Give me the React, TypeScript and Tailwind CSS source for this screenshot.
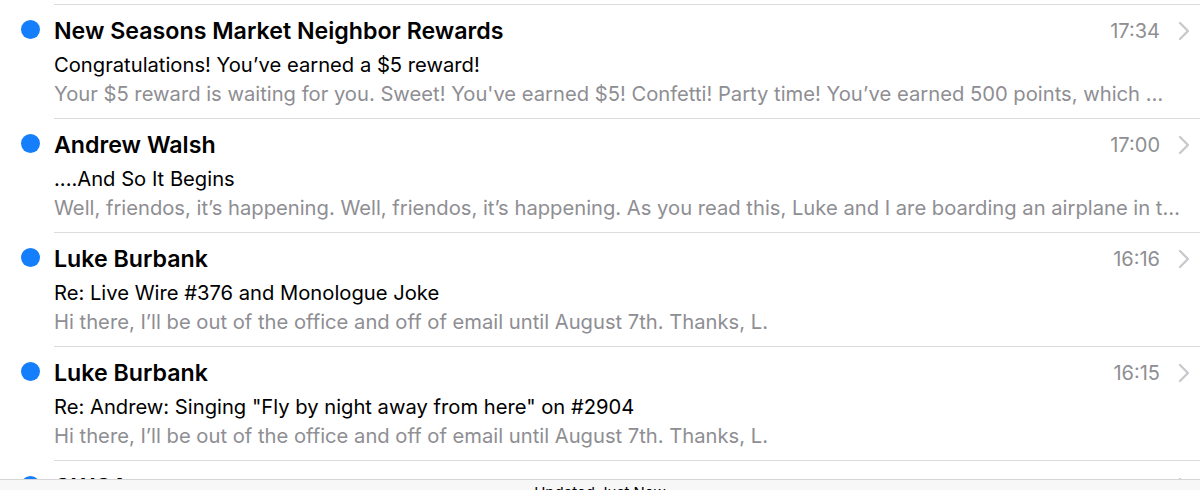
import React from 'react';

interface Mail {
  from: string;
  time: string;
  subject: string;
  preview: string;
}

const mails: Mail[] = [
  {
    from: 'New Seasons Market Neighbor Rewards',
    time: '17:34',
    subject: 'Congratulations! You’ve earned a $5 reward!',
    preview:
      'Your $5 reward is waiting for you. Sweet! You\'ve earned $5! Confetti! Party time! You’ve earned 500 points, which means you can redeem them at any store.',
  },
  {
    from: 'Andrew Walsh',
    time: '17:00',
    subject: '....And So It Begins',
    preview:
      'Well, friendos, it’s happening. Well, friendos, it’s happening. As you read this, Luke and I are boarding an airplane in the morning.',
  },
  {
    from: 'Luke Burbank',
    time: '16:16',
    subject: 'Re: Live Wire #376 and Monologue Joke',
    preview: 'Hi there, I’ll be out of the office and off of email until August 7th. Thanks, L.',
  },
  {
    from: 'Luke Burbank',
    time: '16:15',
    subject: 'Re: Andrew: Singing "Fly by night away from here" on #2904',
    preview: 'Hi there, I’ll be out of the office and off of email until August 7th. Thanks, L.',
  },
  {
    from: 'GWGA',
    time: '15:02',
    subject: 'Weekly update',
    preview: 'Hello everyone,',
  },
];

function Chevron() {
  return (
    <svg width="12" height="20" viewBox="0 0 12 20" fill="none" className="shrink-0">
      <path d="M2 2l8 8-8 8" stroke="#c7c7cc" strokeWidth="2.2" strokeLinecap="round" strokeLinejoin="round" />
    </svg>
  );
}

function MailRow({ mail }: { mail: Mail }) {
  return (
    <div className="flex h-[114px] shrink-0">
      <div className="w-[54px] shrink-0 flex justify-center pt-[15px] pl-[6px]">
        <div className="w-[19px] h-[19px] rounded-full bg-[#147efb]" />
      </div>
      <div className="flex-1 min-w-0 border-b border-[#dcdcdf] pr-[10px]">
        <div className="flex items-center h-[28px] mt-[12px]">
          <div className="flex-1 min-w-0 truncate text-[23.2px] font-semibold text-black leading-[28px]">
            {mail.from}
          </div>
          <div className="text-[20px] text-[#8e8e93] ml-4 leading-[28px]">{mail.time}</div>
          <div className="ml-[18px]">
            <Chevron />
          </div>
        </div>
        <div className="text-[20.2px] text-black truncate mt-[7px] leading-[26px]">{mail.subject}</div>
        <div className="text-[20.2px] text-[#8e8e93] truncate leading-[26px] mt-[3px] pr-[10px]">{mail.preview}</div>
      </div>
    </div>
  );
}

export default function App() {
  return (
    <div
      className="w-[1200px] h-[490px] overflow-hidden bg-white flex flex-col"
      style={{ fontFamily: 'Inter, "Noto Sans", sans-serif' }}
    >
      <div className="h-[479px] overflow-hidden shrink-0 flex flex-col">
        <div className="h-[5px] ml-[54px] border-b border-[#dcdcdf] shrink-0" />
        {mails.map((m, i) => (
          <MailRow key={i} mail={m} />
        ))}
      </div>
      <div className="h-[44px] shrink-0 bg-[#f7f7f7] border-t border-[#d6d6d8] flex justify-center pt-[3px]">
        <span className="text-[15px] text-black leading-[20px]">Updated Just Now</span>
      </div>
    </div>
  );
}
